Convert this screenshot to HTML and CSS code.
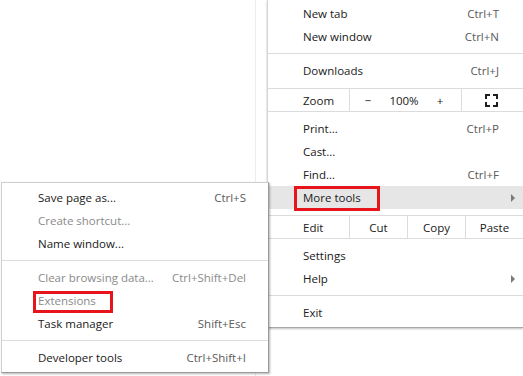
FILE: index.html
```html
<!DOCTYPE html>
<html>
<head>
<meta charset="utf-8">
<link rel="stylesheet" href="styles.css">
</head>
<body>
<div class="page">
  <div class="backdrop"></div>

  <div class="menu main">
    <div class="item"><span class="label">New tab</span><span class="accel">Ctrl+T</span></div>
    <div class="item"><span class="label">New window</span><span class="accel">Ctrl+N</span></div>
    <div class="sep"></div>
    <div class="item"><span class="label">Downloads</span><span class="accel">Ctrl+J</span></div>
    <div class="cells">
      <div class="cell first">Zoom</div>
      <div class="cell zoomctrl"><span class="zbtn">&minus;</span><span class="zbtn">100%</span><span class="zbtn">+</span></div>
      <div class="cell fs">
        <svg class="fsicon" width="13" height="13" viewBox="0 0 13 13"><path d="M1 5V1H5M8 1H12V5M12 8V12H8M5 12H1V8" fill="none" stroke="#202020" stroke-width="2"/></svg>
      </div>
    </div>
    <div class="item"><span class="label">Print...</span><span class="accel">Ctrl+P</span></div>
    <div class="item"><span class="label">Cast...</span></div>
    <div class="item"><span class="label">Find...</span><span class="accel">Ctrl+F</span></div>
    <div class="item hover"><span class="label">More tools</span><span class="arrow"></span></div>
    <div class="cells">
      <div class="cell first">Edit</div>
      <div class="cell edit">Cut</div>
      <div class="cell edit">Copy</div>
      <div class="cell edit">Paste</div>
    </div>
    <div class="item"><span class="label">Settings</span></div>
    <div class="item"><span class="label">Help</span><span class="arrow"></span></div>
    <div class="sep"></div>
    <div class="item"><span class="label">Exit</span></div>
  </div>

  <div class="menu sub">
    <div class="item"><span class="label">Save page as...</span><span class="accel">Ctrl+S</span></div>
    <div class="item disabled"><span class="label">Create shortcut...</span></div>
    <div class="item"><span class="label">Name window...</span></div>
    <div class="sep"></div>
    <div class="item disabled"><span class="label">Clear browsing data...</span><span class="accel">Ctrl+Shift+Del</span></div>
    <div class="item disabled"><span class="label">Extensions</span></div>
    <div class="item"><span class="label">Task manager</span><span class="accel">Shift+Esc</span></div>
    <div class="sep"></div>
    <div class="item"><span class="label">Developer tools</span><span class="accel">Ctrl+Shift+I</span></div>
  </div>

  <div class="mark mark-more"></div>
  <div class="mark mark-ext"></div>
</div>
</body>
</html>
```

FILE: styles.css
```css
html, body {
  margin: 0;
  padding: 0;
  background: #ffffff;
}
body {
  width: 523px;
  height: 376px;
  overflow: hidden;
  font-family: "Open Sans", "Noto Sans", "Liberation Sans", sans-serif;
  font-size: 11.5px;
  color: #202020;
}
.page {
  position: relative;
  width: 523px;
  height: 376px;
  overflow: hidden;
}
.backdrop {
  width: 255px;
  height: 376px;
  border-right: 1px solid #ececec;
}
.menu {
  position: absolute;
  background: #ffffff;
  box-sizing: border-box;
}
.main {
  left: 267px;
  top: 0;
  width: 256px;
  height: 328px;
  padding: 2px 0 3px 0;
  border-left: 1px solid #d6d6d6;
  border-bottom: 1px solid #a8a8a8;
  box-shadow: 0 1px 2px rgba(0,0,0,0.25);
  z-index: 1;
}
.sub {
  left: 1px;
  top: 182px;
  width: 268px;
  height: 191px;
  padding: 3px 0 3px 0;
  border: 1px solid #cfcfcf;
  border-right-color: #9a9a9a;
  border-bottom-color: #9a9a9a;
  box-shadow: 1px 1px 2px rgba(0,0,0,0.3);
  z-index: 2;
}
.item {
  display: flex;
  align-items: center;
  height: 23px;
  white-space: nowrap;
}
.main .item {
  padding: 0 8px 0 35px;
}
.sub .item {
  padding: 0 22px 0 36px;
}
.label {
  flex: 1;
}
.accel {
  color: #5a5a5a;
}
.main .accel {
  margin-right: 16px;
}
.item.hover {
  background: #e6e6e6;
}
.disabled .label,
.disabled .accel {
  color: #8a8a8a;
}
.arrow {
  width: 0;
  height: 0;
  border-left: 4px solid #7a7a7a;
  border-top: 4px solid transparent;
  border-bottom: 4px solid transparent;
}
.sep {
  height: 1px;
  background: #dcdcdc;
  margin: 5px 0;
}
.cells {
  display: flex;
  height: 22px;
  border-top: 1px solid #dcdcdc;
  border-bottom: 1px solid #dcdcdc;
  margin: 6px 0 5px 0;
}
.cell {
  display: flex;
  align-items: center;
  justify-content: center;
  border-left: 1px solid #dcdcdc;
}
.cell.first {
  width: 81px;
  box-sizing: border-box;
  justify-content: flex-start;
  padding-left: 35px;
  border-left: none;
}
.zoomctrl {
  width: 111px;
  justify-content: flex-start;
}
.zbtn {
  width: 36px;
  text-align: center;
}
.fs {
  flex: 1;
  padding-right: 2px;
}
.fsicon {
  display: block;
}
.edit {
  width: 57px;
}
.edit:last-child {
  flex: 1;
}
.mark {
  position: absolute;
  border: 3px solid #e8141b;
  box-sizing: border-box;
  z-index: 3;
}
.mark-more {
  left: 294px;
  top: 186px;
  width: 86px;
  height: 25px;
}
.mark-ext {
  left: 33px;
  top: 291px;
  width: 80px;
  height: 22px;
}
```
